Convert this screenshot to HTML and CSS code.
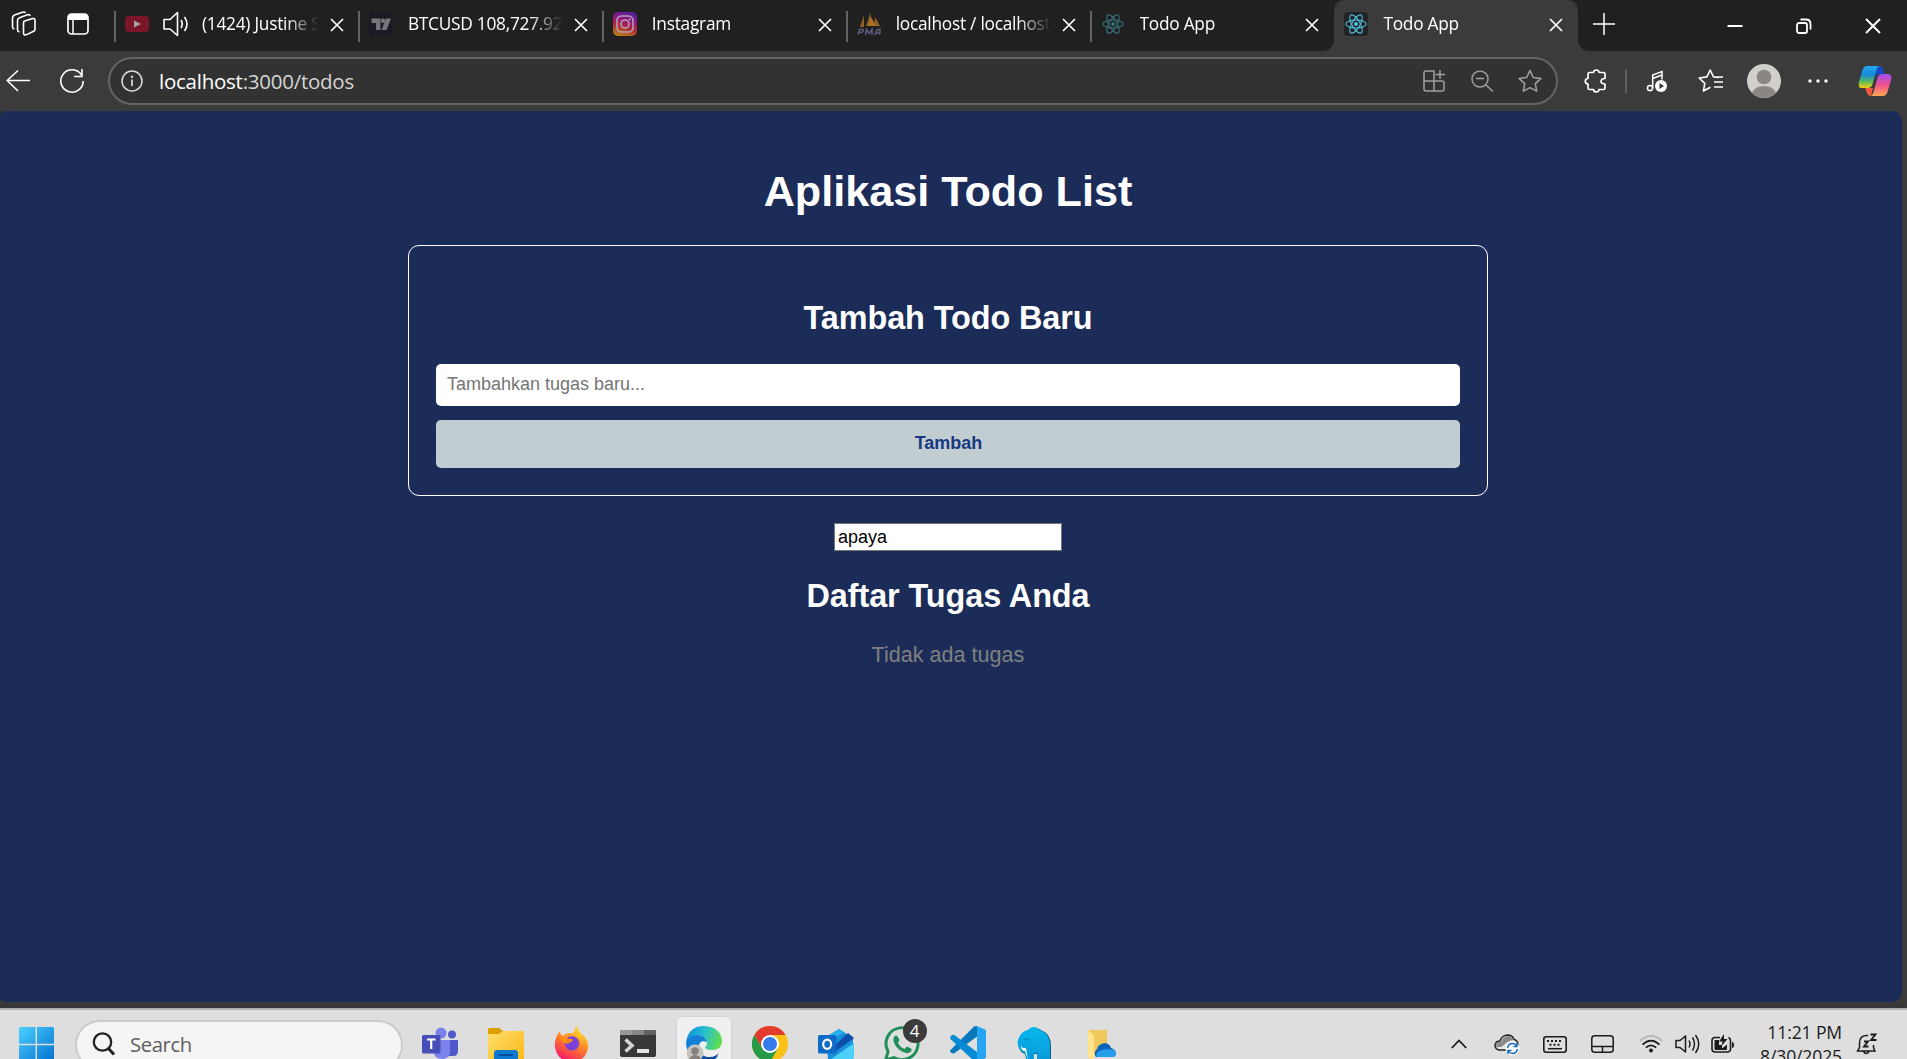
FILE: index.html
```html
<!DOCTYPE html>
<html lang="id">
<head>
<meta charset="utf-8">
<title>Todo App</title>
<link rel="stylesheet" href="styles.css">
</head>
<body>
<svg class="defs" width="0" height="0">
  <defs>
    <symbol id="x" viewBox="0 0 14 14"><path d="M1 1l12 12M13 1L1 13" fill="none" stroke="#fff" stroke-width="1.7"/></symbol>
    <symbol id="react" viewBox="0 0 24 24"><g fill="none" stroke="#53c1de" stroke-width="1.1"><ellipse cx="12" cy="12" rx="10.3" ry="4"/><ellipse cx="12" cy="12" rx="10.3" ry="4" transform="rotate(60 12 12)"/><ellipse cx="12" cy="12" rx="10.3" ry="4" transform="rotate(120 12 12)"/></g><circle cx="12" cy="12" r="2" fill="#53c1de"/></symbol>
    <linearGradient id="win" x1="0" y1="0" x2="1" y2="1"><stop offset="0" stop-color="#4cd0ff"/><stop offset="1" stop-color="#0070d0"/></linearGradient>
    <linearGradient id="insta" x1="0.3" y1="1" x2="0.6" y2="0"><stop offset="0" stop-color="#b98018"/><stop offset=".35" stop-color="#b03038"/><stop offset=".65" stop-color="#94187a"/><stop offset="1" stop-color="#54209c"/></linearGradient>
    <linearGradient id="fold" x1="0" y1="0" x2="1" y2="1"><stop offset="0" stop-color="#ffdd70"/><stop offset="1" stop-color="#fbb911"/></linearGradient>
    <linearGradient id="ff" x1=".8" y1="0" x2=".3" y2="1"><stop offset="0" stop-color="#ffe53b"/><stop offset=".45" stop-color="#ff8a22"/><stop offset="1" stop-color="#f5156c"/></linearGradient>
    <linearGradient id="edgeTop" x1="0" y1=".3" x2="1" y2=".5"><stop offset="0" stop-color="#0e90dc"/><stop offset=".5" stop-color="#28bfd0"/><stop offset="1" stop-color="#62df48"/></linearGradient>
    <linearGradient id="copL" x1="0" y1="0" x2="0" y2="1"><stop offset="0" stop-color="#22a8f0"/><stop offset=".4" stop-color="#1689d8"/><stop offset=".7" stop-color="#58b860"/><stop offset="1" stop-color="#f4d010"/></linearGradient>
    <linearGradient id="copR" x1="0" y1="0" x2="0" y2="1"><stop offset="0" stop-color="#a050f0"/><stop offset=".5" stop-color="#f0508c"/><stop offset="1" stop-color="#ffa850"/></linearGradient>
    <linearGradient id="eleph" x1="0" y1="0" x2="0" y2="1"><stop offset="0" stop-color="#08b9ee"/><stop offset="1" stop-color="#0898d8"/></linearGradient>
  </defs>
</svg>

<header class="tabbar">
  <div class="tab-tools">
    <svg width="26" height="26" viewBox="0 0 26 26" fill="none" stroke="#fff" stroke-width="1.6" stroke-linejoin="round"><path d="M13 10.200l8.500-2.600q2.500-.600 2.500 1.700v9q0 1.400-1.300 2l-7 3.300q-3.200 1.200-3.200-1.600v-9.300q0-1.900 .5-2.500z" /><path d="M8.500 21q-2-.5-2-2.300V9.500q0-2 2-2.800l8-3q2-.6 2.800 1.300M3.300 18Q1.500 17.500 1.500 15.500V7q0-2 2-2.900l8-2.900q2.300-.6 3 .8"/></svg>
    <svg width="22" height="22" viewBox="0 0 22 22"><rect x="1" y="1" width="20" height="20" rx="3.500" fill="none" stroke="#fff" stroke-width="1.7"/><path d="M1 7V4q0-3 3-3h14q3 0 3 3v3z" fill="#fff"/><path d="M6 6v15" stroke="#fff" stroke-width="1.500"/></svg>
  </div>
  <div class="tab">
    <svg class="fav" viewBox="0 0 24 24"><rect y="4" width="24" height="16" rx="4" fill="#7d1629"/><path d="M9 8.500l7 3.500-7 3.500z" fill="#a3a3a3"/></svg>
    <svg class="sound" width="26" height="26" viewBox="0 0 26 26" fill="none" stroke="#fff" stroke-width="1.600" stroke-linejoin="round"><path d="M1 8.500h6l7.500-7v23l-7.500-6.500H1z"/><path d="M18 9q2.500 4 0 8M21.500 6q5 7 0 14"/></svg>
    <span class="title">(1424) Justine S</span><svg class="close"><use href="#x"/></svg>
  </div>
  <div class="tab">
    <svg class="fav" viewBox="0 0 24 24"><rect width="24" height="24" rx="4" fill="#191b25"/><path d="M2.500 6.500h9V18H7v-7H2.500zM17 6.500h5L17.500 18h-5z" fill="#77777b"/><circle cx="14" cy="8.800" r="2.200" fill="#77777b"/></svg>
    <span class="title">BTCUSD 108,727.92</span><svg class="close"><use href="#x"/></svg>
  </div>
  <div class="tab">
    <svg class="fav" viewBox="0 0 24 24"><rect width="24" height="24" rx="5" fill="url(#insta)"/><g fill="none" stroke="#b8a0b4" stroke-width="1.600"><rect x="4" y="4" width="16" height="16" rx="4.500"/><circle cx="12" cy="12" r="4"/></g><circle cx="16.700" cy="7.300" r="1.100" fill="#b8a0b4"/></svg>
    <span class="title">Instagram</span><svg class="close"><use href="#x"/></svg>
  </div>
  <div class="tab">
    <svg class="fav" viewBox="0 0 24 24"><path d="M3 15l4-12v12zM9 14L13.500 .5l1 13.500zM17 14l1-9 5 9z" fill="#94602a"/><path d="M11 14l3-9 5 9z" fill="#ad7027"/><path d="M1 23l1.500-5.500h3.500q1 3-3.500 3M8.500 23l1-5.500 2.500 4 3-4v5.500M17.500 23l3-5.500h2.500v5.500M18.500 21h4" fill="none" stroke="#5c5d80" stroke-width="1.500"/></svg>
    <span class="title">localhost / localhost</span><svg class="close"><use href="#x"/></svg>
  </div>
  <div class="tab last">
    <svg class="fav dim"><use href="#react"/></svg>
    <span class="title">Todo App</span><svg class="close"><use href="#x"/></svg>
  </div>
  <div class="tab active">
    <svg class="fav dark"><use href="#react"/></svg>
    <span class="title">Todo App</span><svg class="close"><use href="#x"/></svg>
  </div>
  <div class="new-tab"><svg width="22" height="22" viewBox="0 0 22 22"><path d="M11 0v22M0 11h22" stroke="#fff" stroke-width="1.500"/></svg></div>
  <div class="window-controls">
    <svg width="16" height="16" viewBox="0 0 16 16"><path d="M.5 8h15" stroke="#fff" stroke-width="2"/></svg>
    <svg width="16" height="16" viewBox="0 0 16 16" fill="none" stroke="#fff" stroke-width="1.800"><rect x="1" y="5" width="10" height="10" rx="2"/><path d="M4.500 1.500H10q4.500 0 4.500 4.500v5.500"/></svg>
    <svg width="16" height="16" viewBox="0 0 16 16"><path d="M1 1l14 14M15 1L1 15" stroke="#fff" stroke-width="2"/></svg>
  </div>
</header>

<nav class="toolbar">
  <div class="nav-buttons">
    <svg width="24" height="24" viewBox="0 0 24 24" fill="none" stroke="#fff" stroke-width="1.600"><path d="M24 11.500H1M12 1.500L1.200 11.500 12 22"/></svg>
    <svg width="26" height="26" viewBox="0 0 26 26" fill="none" stroke="#fff" stroke-width="1.600"><path d="M24.200 13A11.200 11.200 0 1 1 22.500 7M23 1v7.500h-8"/></svg>
  </div>
  <div class="address">
    <svg width="22" height="22" viewBox="0 0 22 22"><circle cx="11" cy="11" r="10" fill="none" stroke="#ddd" stroke-width="1.500"/><path d="M11 9.500V16" stroke="#ddd" stroke-width="1.700"/><circle cx="11" cy="6.700" r="1.200" fill="#ddd"/></svg>
    <span class="url"><b>localhost</b>:3000/todos</span>
    <div class="cell"><svg width="22" height="22" viewBox="0 0 22 22" fill="none" stroke="#a0a0a0" stroke-width="1.500"><path d="M11 20.500V1H3Q1 1 1 3v16q0 2 2 2h16q2 0 2-2v-6q0-2-2-2H1M17 0v9M12.500 4.500H22"/></svg></div>
    <div class="cell"><svg width="22" height="22" viewBox="0 0 22 22" fill="none" stroke="#a0a0a0" stroke-width="1.500"><circle cx="9" cy="9" r="8"/><path d="M15 15l7 6.500M5 8.500h8"/></svg></div>
    <div class="cell"><svg width="24" height="24" viewBox="0 0 24 24" fill="none" stroke="#a0a0a0" stroke-width="1.500" stroke-linejoin="round"><path d="M12 1.500l3.300 6.900 7.600 1-5.600 5.200 1.400 7.600L12 18.600l-6.700 3.600 1.400-7.600L1.100 9.400l7.600-1z"/></svg></div>
  </div>
  <div class="actions">
    <div class="cell"><svg width="24" height="24" viewBox="0 0 24 24" fill="none" stroke="#fff" stroke-width="1.700" stroke-linejoin="round"><path d="M9.500 3.500q.3-2.500 2.800-2.500t2.800 2.500h4.400q1.500 0 1.500 1.500v4.500q-4 .2-4 2.800t4 2.700v4q0 1.500-1.500 1.500H15q-.3 2.500-2.700 2.500T9.500 20.500H5.500Q4 20.500 4 19v-4q-2.700-.3-2.700-2.800T4 9.500V5q0-1.500 1.500-1.500z"/></svg></div>
    <i class="sep"></i>
    <div class="cell music"><svg width="22" height="22" viewBox="0 0 22 22" fill="none" stroke="#fff" stroke-width="1.500"><circle cx="4" cy="18" r="2.600"/><path d="M6.700 18V5L16 1.500v8M6.700 8.500L16 5"/><circle cx="15" cy="16" r="6" fill="#fff" stroke="none"/><path d="M13.500 13l4.500 3-4.500 3z" fill="#3b3b3b" stroke="none"/></svg></div>
    <div class="cell"><svg width="25" height="24" viewBox="0 0 25 24" fill="none" stroke="#fff" stroke-width="1.600" stroke-linejoin="round"><path d="M21 8.500l-5.500-.6L12.200 1 8.900 7.900 1.200 9l5.600 5.300L5.400 22l7-3.700M16 8h9M16 13h9M16 18h9"/></svg></div>
    <div class="cell"><svg width="34" height="34" viewBox="0 0 34 34"><circle cx="17" cy="17" r="17" fill="#d1cfca"/><circle cx="17" cy="13" r="7.300" fill="#8b8683"/><path d="M5 29q3-7 12-7t12 7q-5 5-12 5T5 29z" fill="#8b8683"/></svg></div>
    <div class="cell"><svg width="20" height="4" viewBox="0 0 20 4" fill="#fff"><circle cx="2" cy="2" r="1.700"/><circle cx="10" cy="2" r="1.700"/><circle cx="18" cy="2" r="1.700"/></svg></div>
    <div class="cell copilot"><svg width="34" height="32" viewBox="0 0 34 32"><path d="M17 1h4q3 0 4 3l1.500 5H22q-3 0-4 3z" fill="#1848c8"/><path d="M7 23h8l-2 8q-3 0-4-3z" fill="#f05a3c"/><path d="M9 1h13q-2.500 0-3.500 4l-4 14q-1 4-5 4H4Q-.5 23 1 17L4.500 5Q6 1 9 1z" fill="url(#copL)"/><path d="M25 31H12q2.500 0 3.500-4l4-14q1-4 5-4H30q4.500 0 3 6l-3.500 12Q28 31 25 31z" fill="url(#copR)"/></svg></div>
  </div>
</nav>

<div class="viewport">
  <main class="page">
    <h1>Aplikasi Todo List</h1>
    <form class="card">
      <h2>Tambah Todo Baru</h2>
      <input class="new-todo" type="text" placeholder="Tambahkan tugas baru...">
      <button class="add" type="button">Tambah</button>
    </form>
    <input class="search" type="text" value="apaya">
    <h2 class="list-title">Daftar Tugas Anda</h2>
    <p class="empty">Tidak ada tugas</p>
  </main>
</div>

<footer class="taskbar">
  <div class="start"><svg width="35" height="35" viewBox="0 0 35 35" fill="url(#win)"><path d="M0 1.500Q0 0 1.500 0H16.500V16.700H0zM18 0h15.500Q35 0 35 1.500V16.700H18zM0 18.200h16.500V35H0zM18 18.200h17V35H18z"/></svg></div>
  <div class="searchbox">
    <svg width="24" height="24" viewBox="0 0 24 24" fill="none" stroke="#222"><circle cx="10.500" cy="10" r="8.700" stroke-width="2.300"/><path d="M16.500 16.500l5.500 6" stroke-width="3"/></svg>
    <span>Search</span>
  </div>
  <div class="apps">
    <div class="app"><svg width="36" height="36" viewBox="0 0 36 36"><circle cx="30" cy="8.500" r="4" fill="#5059c9"/><path d="M25 14h11v11q0 5-5 5h-6z" fill="#5059c9"/><circle cx="19" cy="7" r="5.500" fill="#7b83eb"/><path d="M12 14h16v12q0 7-8 7t-8-7z" fill="#7b83eb"/><rect y="9" width="18.500" height="18.500" rx="1.500" fill="#464eb8"/><path d="M5 13.500h8.500M9.200 13.500V23" stroke="#fff" stroke-width="2.200"/></svg></div>
    <div class="app"><svg width="36" height="36" viewBox="0 0 36 36"><path d="M0 4q0-2 2-2h9l4 3v6H0z" fill="#dda000"/><path d="M0 8h11l4-3h21v31H0z" fill="url(#fold)"/><path d="M6 36V27q0-3 3-3h18q3 0 3 3v9z" fill="#0d79d0"/><path d="M11 29h14" stroke="#074d98" stroke-width="2"/></svg></div>
    <div class="app"><svg width="36" height="36" viewBox="0 0 36 36"><path d="M23 0q2 7 7 10 5 6 4 12-2 13-16 14Q3 35 1 21 0 12 6 5q0 4 3 5 3-3 6-3 3 1 5-1 1-4 3-6z" fill="url(#ff)"/><circle cx="18" cy="17.500" r="7.200" fill="#7941d8"/><path d="M6 10q5-1 8 3 4-1 5 1-1 2-4 3-2 2-6-1-3-2-3-6z" fill="#ff8b1c"/><path d="M20 8q8 3 8 10 3-8-5-11z" fill="#ffc626"/></svg></div>
    <div class="app"><svg width="36" height="36" viewBox="0 0 36 36"><rect y="4" width="36" height="27" rx="2" fill="#383838"/><path d="M0 9V6q0-2 2-2h10v5z" fill="#989898"/><path d="M12 4h12v5H12z" fill="#858585"/><path d="M24 4h10q2 0 2 2v3H24z" fill="#606060"/><path d="M5.500 13.500l6.500 6-6.500 6" fill="none" stroke="#d4d4d4" stroke-width="3.600"/><rect x="17" y="23" width="12" height="4" fill="#e4e4e4"/></svg></div>
    <div class="app open"><svg width="36" height="36" viewBox="0 0 36 36"><path d="M0 17Q2 0 18 0q17 1 18 15 0 9-10 9-7 0-7-3 2-1 2-4-1-8-11-8-7 1-10 8z" fill="url(#edgeTop)"/><path d="M0 17Q2 9 11 9q8 0 10 7-8-3-8 5 1 10 12 11l7-2q-4 6-13 6Q1 35 0 17z" fill="#1380d6"/><path d="M13 20q-1 12 11 11 5 0 9-4-4 9-14 9-9-3-6-16z" fill="#104c9c"/><circle cx="9" cy="27" r="8.500" fill="#c7c5c2"/><circle cx="9" cy="25" r="3.800" fill="#85807d"/><path d="M3 33q2-4 6-4t6 4-6 3-6-3z" fill="#85807d"/></svg></div>
    <div class="app"><svg width="36" height="36" viewBox="0 0 36 36"><circle cx="18" cy="18" r="18" fill="#fbc116"/><path d="M2.400 9A18 18 0 0 1 33.600 9H18L10.200 22.500z" fill="#e33b2e"/><path d="M2.400 9A18 18 0 0 0 18 36l7.800-13.500H10.200z" fill="#249a48"/><circle cx="18" cy="18" r="9" fill="#fff"/><circle cx="18" cy="18" r="7" fill="#347bec"/></svg></div>
    <div class="app"><svg width="36" height="36" viewBox="0 0 36 36"><path d="M8 11l13-8 14 9v17q0 5-5 5H10z" fill="#1a90dc"/><path d="M8 11l13-8 5 3-15 10z" fill="#28b0ee"/><path d="M18 18l12-11 6 5-18 13z" fill="#0b4fab"/><path d="M12 34l24-17v13q0 5-5 5z" fill="#4bd0f8"/><rect y="9" width="18.500" height="18.500" rx="1.500" fill="#0d6ac6"/><ellipse cx="9.200" cy="18.300" rx="4" ry="4.600" fill="none" stroke="#fff" stroke-width="2.200"/></svg></div>
    <div class="app"><svg width="36" height="36" viewBox="0 0 36 36"><path d="M1.500 34l2.600-8.500A16 16 0 1 1 10 31.500z" fill="none" stroke="#1f8f59" stroke-width="3"/><path d="M10 11q2-3 4 0l1.500 3-1.500 3q2 4 6.500 6l2.500-2.500 4 2q1.500 1 0 3-3 3-8 .5Q11 22 9.500 15q-.3-2 .5-4z" fill="#1f8f59"/></svg><span class="badge">4</span></div>
    <div class="app"><svg width="36" height="36" viewBox="0 0 36 36"><path d="M0 24.500l24-24L27 0v10.500L4 27.500q-4 0-4-3z" fill="#0878bd"/><path d="M1 10q2-2 4-.5L27 26v10h-2L1 13.500q-1.500-1.500 0-3.500z" fill="#078bd3"/><path d="M27 0l9 4v28l-9 4z" fill="#26a5f2"/></svg></div>
    <div class="app"><svg width="36" height="36" viewBox="0 0 36 36"><path d="M3 14Q6 5 13 4q5-5 12 0 10 4 10 16v14H22v-6h-4v8h-7l-2-8q-4-1-6-6-1-4 0-8z" fill="#176078"/><path d="M2 14Q5 5 12 4q5-6 12 0 10 4 10 16v14H21v-7h-3v9h-7L9 27q-4-1-6-5-2-4-1-8z" fill="url(#eleph)"/><path d="M13 12q-1 9 5 9 8-1 8-12" fill="none" stroke="#08a2d8" stroke-width="1"/><path d="M8 14q2-2 4 0" fill="none" stroke="#078abb" stroke-width="1.200"/><path d="M5 19q1 4 5 3l2 12-3-9q-4 0-4-6z" fill="#fff"/></svg></div>
    <div class="app drive"><svg width="30" height="36" viewBox="0 0 30 36"><path d="M1 4h19v25H4z" fill="#f1c95a"/><path d="M1 4l6 5v27L1 31z" fill="#ffe38d"/><path d="M9 31q-3-4 1-8 1-5 8-6 5 1 6 5 4 1 5 5 0 4-4 4z" fill="#0b63bd"/><path d="M10 31q-2-4 2-6l7-2q4 1 6 0 4 1 4 5 0 3-4 3z" fill="#259de9"/></svg></div>
  </div>
  <div class="tray">
    <svg class="chev" width="16" height="10" viewBox="0 0 16 10"><path d="M.8 9L8 1.500 15.200 9" fill="none" stroke="#1b1b1b" stroke-width="1.800"/></svg>
    <svg class="cloud" width="26" height="24" viewBox="0 0 26 24"><path d="M5 18q-4-1-4-4.500Q1.500 9 6 9q2-6 8-6 5 .5 6 4.500 4 1 4 5.500 0 5-4 5z" fill="#e6e6e6" stroke="#222" stroke-width="1.500"/><path d="M2 15q0-6 5-5 2-6 7-6 5 1 5 4-6 1-9 5-3 3-8 2z" fill="#8a8a8a"/><circle cx="18.500" cy="16.500" r="7" fill="#fff"/><path d="M13.500 16q1-4.500 5-4.500 3 0 4.500 2.500M23 11v3.500h-3.500M23.500 17q-1 4.500-5 4.500-3 0-4.500-2.500M14 22v-3.500h3.500" fill="none" stroke="#0b66b8" stroke-width="1.400"/></svg>
    <svg class="kbd" width="24" height="17" viewBox="0 0 24 17" fill="none" stroke="#1b1b1b"><rect x=".8" y=".8" width="22.400" height="15.400" rx="2.500" stroke-width="1.600"/><path d="M4 5h16M6.500 8.800h11" stroke-width="2" stroke-dasharray="2 2"/><path d="M5 12.700h14" stroke-width="1.500"/></svg>
    <svg class="pad" width="23" height="18" viewBox="0 0 23 18" fill="none" stroke="#1b1b1b" stroke-width="1.500"><rect x=".8" y=".8" width="21.400" height="16.400" rx="3"/><path d="M1 11.500h21M11.500 11.500v6"/></svg>
    <svg class="wifi" width="24" height="18" viewBox="0 0 24 18" fill="none" stroke="#1b1b1b" stroke-width="1.700"><path d="M.8 6.200q11.200-10.500 22.400 0" stroke="#b5b5b5"/><path d="M3.500 9.700q8.500-8 17 0M6.800 12.700q5.200-4.800 10.400 0"/><circle cx="12" cy="15.500" r="2" fill="#1b1b1b" stroke="none"/></svg>
    <svg class="vol" width="25" height="20" viewBox="0 0 25 20" fill="none" stroke="#1b1b1b" stroke-width="1.500" stroke-linejoin="round"><path d="M1 6.500h4L10.500 2v16L5 13.500H1zM14 6.500q2 3.500 0 7M17.500 3.500q4 6.500 0 13M20.500 1q6.500 9 0 18"/></svg>
    <svg class="bat" width="24" height="20" viewBox="0 0 24 20"><path d="M9 3.500H4q-3 0-3 3V15q0 3 3 3h12q3.500 0 3.500-3V6.500q0-2-2-3" fill="none" stroke="#1b1b1b" stroke-width="1.600"/><path d="M21 8q2 0 2 3t-2 3z" fill="#1b1b1b"/><path d="M3.500 6H8v5h3v3.500l5-4V15q0 1-1 1h-10q-1.500 0-1.500-1z" fill="#1b1b1b"/><path d="M13 0L8 7.500h3.500L10.500 12 16.500 5H13z" fill="#1b1b1b"/></svg>
    <div class="clock"><span>11:21 PM</span><span>8/30/2025</span></div>
    <svg class="bell" width="22" height="23" viewBox="0 0 22 23" fill="none" stroke="#1b1b1b" stroke-width="1.500"><path d="M12 2.500Q3.500 2 3.500 10v4.500L1.500 18H19l-1.500-3.500V12M7.500 18.500q2.500 4 5.500 0"/><path d="M14.500 1.500h5L15 7h5.500M8 8.500h4L8 13.500h4.500" stroke-width="1.800"/></svg>
  </div>
</footer>
</body>
</html>
```
FILE: styles.css
```css
* { box-sizing: border-box; }
body {
  margin: 0;
  width: 1907px;
  height: 1059px;
  overflow: hidden;
  display: flex;
  flex-direction: column;
  background: #3b3b3b;
  font-family: "Open Sans", "Noto Sans", sans-serif;
  color: #fff;
}
svg { display: block; flex: none; }
.defs { position: absolute; }

/* Tab strip */
.tabbar { display: flex; height: 51px; background: #202020; flex: none; }
.tab-tools { width: 115px; flex: none; display: flex; align-items: center; gap: 30px; padding: 0 0 3px 11px; }
.tab {
  position: relative;
  width: 243.900px;
  flex: none;
  display: flex;
  align-items: center;
  gap: 15px;
  padding: 0 21px 3px 10px;
}
.tab:not(.active)::before {
  content: "";
  position: absolute;
  left: -1px;
  top: 11px;
  width: 2px;
  height: 31px;
  background: #636363;
}
.fav { width: 24px; height: 24px; border-radius: 4px; }
.dim { opacity: .5; }
.dark { background: #202224; }
.sound { margin-right: -2px; margin-left: -1px; }
.title {
  flex: 1;
  min-width: 0;
  overflow: hidden;
  white-space: nowrap;
  font-size: 17.300px;
  line-height: 26px;
  letter-spacing: -.25px;
  -webkit-mask-image: linear-gradient(90deg, #000 calc(100% - 36px), transparent calc(100% - 2px));
  mask-image: linear-gradient(90deg, #000 calc(100% - 36px), transparent calc(100% - 2px));
}
.close { width: 14px; height: 14px; margin-top: 2px; margin-left: -6px; margin-right: -6px; }
.active { background: #3b3b3b; border-radius: 10px 10px 0 0; }
.active::before, .active::after {
  content: "";
  position: absolute;
  bottom: 0;
  width: 10px;
  height: 10px;
}
.active::before { left: -10px; background: radial-gradient(circle at 0 0, #202020 9.500px, #3b3b3b 10px); }
.active::after { right: -10px; background: radial-gradient(circle at 100% 0, #202020 9.500px, #3b3b3b 10px); }
.new-tab { display: flex; align-items: center; padding: 0 0 4px 15px; }
.window-controls { margin-left: auto; display: flex; align-items: center; gap: 53px; padding-right: 26px; }

/* Toolbar */
.toolbar { display: flex; align-items: center; height: 60px; flex: none; }
.nav-buttons { display: flex; align-items: center; gap: 29px; width: 108px; padding-left: 6px; }
.address {
  width: 1450px;
  height: 48px;
  display: flex;
  align-items: center;
  padding: 0 2px 0 11px;
  border: 2px solid #646464;
  border-radius: 24px;
  background: #323232;
}
.url { flex: 1; padding-left: 16px; font-size: 20.500px; line-height: 30px; letter-spacing: -.25px; color: #d6d6d6; }
.url b { font-weight: 400; color: #fff; }
.cell { width: 48px; display: flex; justify-content: center; flex: none; }
.actions { display: flex; align-items: center; gap: 6px; padding-left: 14px; }
.sep { width: 2px; height: 24px; background: #606060; margin: 0 -1px; }
.music { padding-left: 2px; }
.copilot { margin-left: 3px; }

/* Web page */
.viewport { height: 897px; flex: none; padding-right: 5px; border-bottom: 6px solid #383838; }
.page {
  height: 891px;
  display: flex;
  flex-direction: column;
  align-items: center;
  background: #1c2c58;
  border-radius: 5px 10px 10px 5px;
  padding: 55px 6px 0 0;
  font-family: "Liberation Sans", Arial, sans-serif;
}
h1 { margin: 0; font-size: 43.200px; line-height: 50px; }
h2 { margin: 0; font-size: 32.400px; line-height: 38px; text-align: center; letter-spacing: -.08px; }
.card {
  width: 1080px;
  height: 251px;
  margin-top: 29px;
  padding: 53px 27px 27px;
  border: 1px solid #fff;
  border-radius: 11px;
  display: flex;
  flex-direction: column;
}
.new-todo {
  height: 42px;
  flex: none;
  margin-top: 27px;
  padding: 0 11px 2px;
  border: 0;
  border-radius: 5px;
  background: #fff;
  font: 18px "Liberation Sans", Arial, sans-serif;
}
.new-todo::placeholder { color: #757575; }
.add {
  height: 48px;
  flex: none;
  margin-top: 14px;
  padding: 0 0 1px 1px;
  border: 0;
  border-radius: 5px;
  background: #c2cdd1;
  color: #16397f;
  font: bold 18px "Liberation Sans", Arial, sans-serif;
}
.search {
  width: 228px;
  height: 28px;
  margin-top: 27px;
  padding: 0 3px;
  border: 1px solid #767676;
  background: #fff;
  color: #000;
  font: 18px "Liberation Sans", Arial, sans-serif;
}
.list-title { margin-top: 26px; }
.empty { margin: 27px 0 0; font-size: 21.600px; line-height: 25px; color: #808080; }

/* Taskbar */
.taskbar {
  position: relative;
  height: 51px;
  overflow: hidden;
  display: flex;
  align-items: flex-start;
  border-top: 2px solid #b2b2b2;
  background: #dedede;
  color: #1b1b1b;
}
.start { width: 75px; flex: none; padding: 17px 0 0 19px; }
.searchbox {
  width: 328px;
  height: 50px;
  margin-top: 10px;
  flex: none;
  display: flex;
  align-items: center;
  gap: 14px;
  padding: 0 0 2px 15px;
  border: 2px solid #cbcbcb;
  border-radius: 25px;
  background: #f5f5f5;
  color: #5e5e5e;
  font-size: 20.300px;
  letter-spacing: -.4px;
}
.apps { display: flex; padding-left: 3.500px; height: 68px; }
.app { position: relative; width: 66px; height: 68px; display: flex; align-items: center; justify-content: center; }
.open { width: 56px; height: 56px; margin: 6px 5px 0; border: 1px solid #d2d2d2; border-radius: 6px; background: #efefef; }
.badge {
  position: absolute;
  left: 34px;
  top: 9px;
  width: 24px;
  height: 24px;
  border-radius: 50%;
  background: #3b3b3b;
  color: #fff;
  font-size: 17px;
  line-height: 24px;
  text-align: center;
}
.drive { padding-left: 4px; }
.tray { margin-left: auto; height: 68px; display: flex; align-items: center; padding-right: 29px; }
.cloud { margin-left: 27px; }
.kbd { margin-left: 23px; }
.pad { margin-left: 24px; }
.wifi { margin-left: 25px; }
.vol { margin-left: 12px; }
.bat { margin-left: 11px; }
.clock {
  width: 97px;
  margin-left: 10px;
  display: flex;
  flex-direction: column;
  align-items: flex-end;
  font-size: 17.600px;
  line-height: 24px;
  letter-spacing: -.15px;
}
.bell { margin-left: 14px; }
```
